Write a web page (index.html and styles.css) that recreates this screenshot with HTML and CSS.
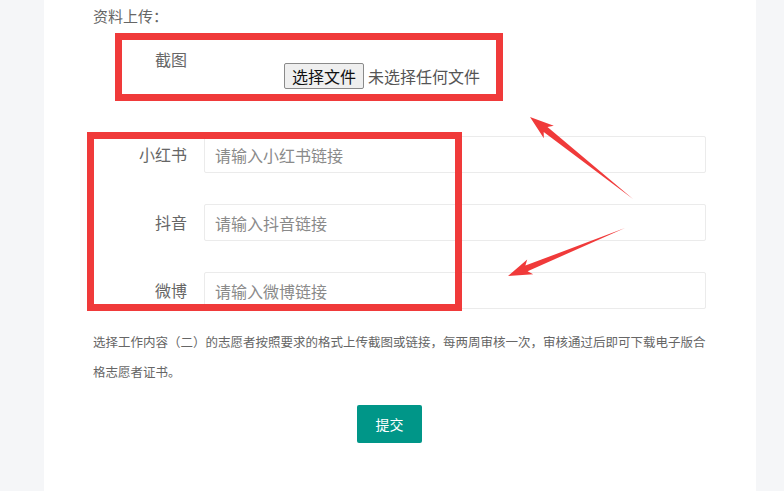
FILE: index.html
```html
<!DOCTYPE html>
<html lang="zh-CN">
<head>
    <meta charset="UTF-8">
    <title>资料上传</title>
    <link rel="stylesheet" href="styles.css">
</head>
<body>
    <div class="panel">
        <div class="section-title">资料上传：</div>

        <div class="upload-row">
            <label class="upload-label">截图</label>
            <div class="file-box">
                <button type="button" class="file-btn">选择文件</button>
                <span class="file-name">未选择任何文件</span>
            </div>
        </div>

        <div class="form-item">
            <label class="item-label">小红书</label>
            <input type="text" class="item-input" placeholder="请输入小红书链接">
        </div>
        <div class="form-item">
            <label class="item-label">抖音</label>
            <input type="text" class="item-input" placeholder="请输入抖音链接">
        </div>
        <div class="form-item">
            <label class="item-label">微博</label>
            <input type="text" class="item-input" placeholder="请输入微博链接">
        </div>

        <p class="tip">选择工作内容（二）的志愿者按照要求的格式上传截图或链接，每两周审核一次，审核通过后即可下载电子版合格志愿者证书。</p>

        <button type="submit" class="submit-btn">提交</button>
    </div>

    <!-- annotation marks drawn on top of the screenshot -->
    <svg class="marks" width="784" height="491" viewBox="0 0 784 491">
        <rect x="118.5" y="36.5" width="381" height="61" fill="none" stroke="#f03a3a" stroke-width="7"/>
        <rect x="90.5" y="135.5" width="368" height="172" fill="none" stroke="#f03a3a" stroke-width="7"/>
        <polygon fill="#f03a3a" points="633,199 547.5,127.1 553.8,125.7 530,117 543.8,138.3 543.7,131.9"/>
        <polygon fill="#f03a3a" points="625,228 525.4,265.6 527.2,259.5 508,276 533.2,274.3 527.6,271.2"/>
    </svg>
</body>
</html>
```

FILE: styles.css
```css
body {
    margin: 0;
    background-color: #f5f6f8;
    font-family: "Noto Sans CJK SC", "Noto Sans", sans-serif;
    color: #666;
}
.panel {
    position: relative;
    width: 613px;
    min-height: 491px;
    margin-left: 44px;
    padding: 4px 50px 0 49px;
    background-color: #fff;
    box-sizing: content-box;
}
.section-title {
    font-size: 15px;
    line-height: 24px;
}
.upload-row {
    display: flex;
    margin-top: 22px;
    height: 63px;
}
.upload-label {
    width: 94px;
    padding-right: 17px;
    text-align: right;
    font-size: 16px;
    line-height: 18px;
}
.file-box {
    display: flex;
    align-items: center;
    margin-top: 13px;
    margin-left: 80px;
    height: 26px;
}
.file-btn {
    height: 26px;
    width: 80px;
    padding: 0;
    background-color: #efefef;
    border: 1px solid #8a8a8a;
    border-radius: 2px;
    font-family: inherit;
    font-size: 16px;
    color: #111;
}
.file-name {
    margin-left: 4px;
    font-size: 16px;
    color: #555;
}
.form-item {
    display: flex;
    align-items: center;
    height: 37px;
    margin-top: 31px;
}
.upload-row + .form-item {
    margin-top: 23px;
}
.item-label {
    width: 94px;
    padding-right: 17px;
    text-align: right;
    font-size: 16px;
    padding-bottom: 1px;
}
.item-input {
    flex: 1;
    height: 37px;
    box-sizing: border-box;
    padding: 0 10px;
    border: 1px solid #ebebeb;
    border-radius: 2px;
    font-family: inherit;
    font-size: 16px;
    color: #333;
    outline: none;
}
.item-input::placeholder {
    color: #8a8a8a;
}
.tip {
    margin: 18px 0 0;
    font-size: 12.5px;
    line-height: 30px;
    color: #666;
}
.submit-btn {
    display: block;
    margin: 18px 0 0 264px;
    width: 65px;
    height: 38px;
    border: none;
    border-radius: 2px;
    background-color: #009688;
    color: #fff;
    font-family: inherit;
    font-size: 14px;
}
.marks {
    position: absolute;
    left: 0;
    top: 0;
    pointer-events: none;
}
```
